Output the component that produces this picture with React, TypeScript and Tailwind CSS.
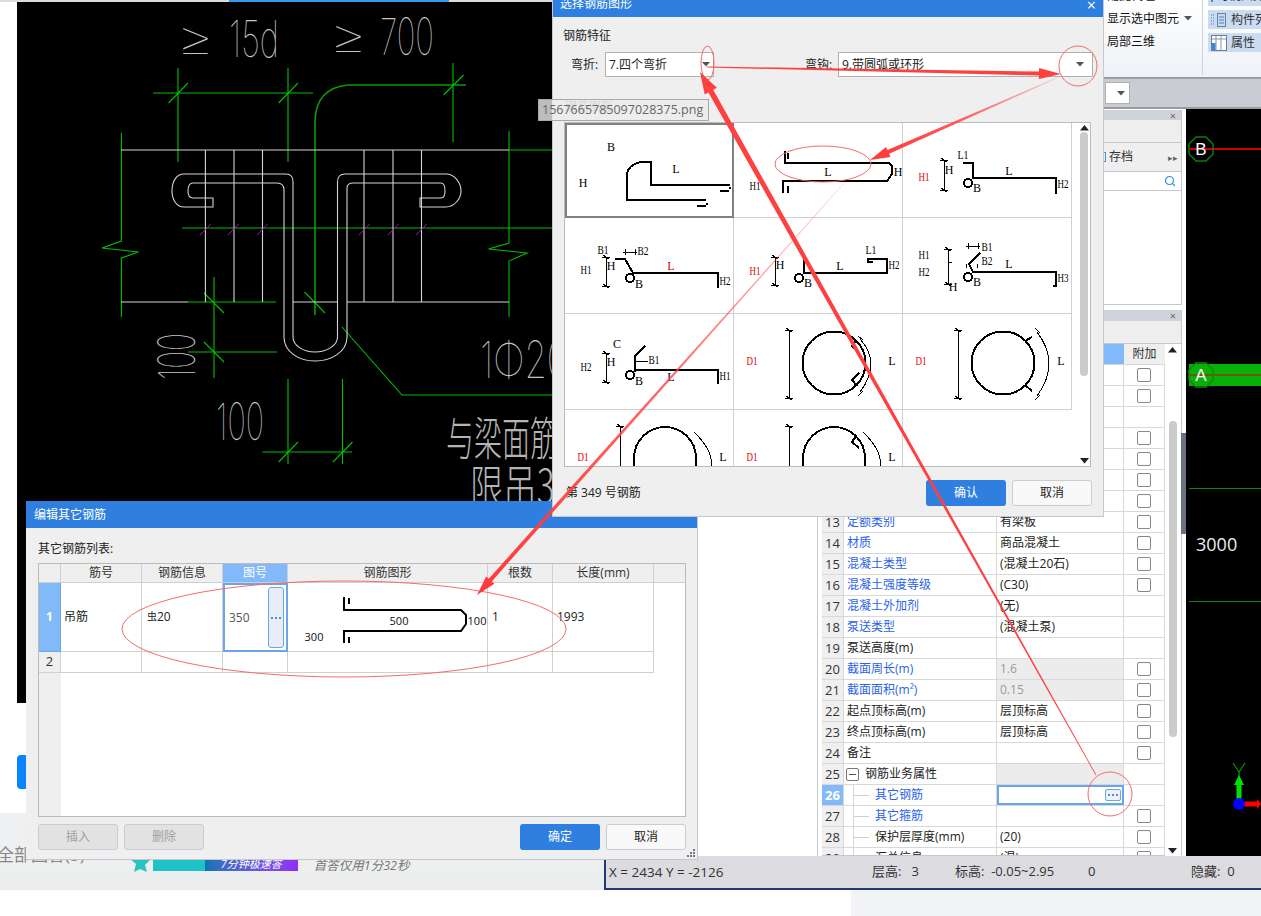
import React from "react";
import { Search } from "lucide-react";

const sans = "font-['Open_Sans','Noto_Sans_CJK_SC',sans-serif]";

function Caret({ className = "" }: { className?: string }) {
  return (
    <svg width="8" height="5" viewBox="0 0 8 5" className={className}>
      <polygon points="0,0 8,0 4,4.5" fill="#555" />
    </svg>
  );
}

function Dots() {
  return (
    <span className="flex items-center gap-[2px]">
      <span className="h-[2px] w-[2px] bg-[#4a8fdc]" />
      <span className="h-[2px] w-[2px] bg-[#4a8fdc]" />
      <span className="h-[2px] w-[2px] bg-[#4a8fdc]" />
    </span>
  );
}

/* ---------- CAD drawing ---------- */
function Cad() {
  const g = "#00c000";
  const w = "#d4d4d4";
  return (
    <svg viewBox="17 2 535 701" width="535" height="701" className="block">
      <rect x="17" y="2" width="535" height="701" fill="#000" />
      <g fill="none" stroke={g} strokeWidth="1.1">
        <path d="M153 93H313M178 68V162M288 68V162M168.6 103L188 83M278.6 103L298 83" />
        <path d="M466 85H348Q315 88 315 123V315" stroke="#0b9a0b" strokeWidth="1.6" />
        <path d="M453 63V142M443.6 95L463.6 75" />
        <path d="M121.4 133V241L102 248L138.6 252L121.4 258V317" />
        <path d="M509 131V243L488.6 249L527 253L509 261V317" />
        <path d="M182 228H552M509 150H552M188 302H276" />
        <path d="M214 277V378M204 293L224 313M204 342L224 362M188 352H277M304.6 292L325 313" />
        <path d="M342 327L402 395H552" />
        <path d="M288 379V464M342.5 379V464M262.5 452H352M278.6 462L298 442M333 462L352.5 442" />
      </g>
      <g fill="none" stroke={w} strokeWidth="1.1">
        <path d="M121 150H509M121 302H188M293 302H337.5M347 302H509" />
        <path d="M205.4 150V302M234 150V302M262.5 150V302M364 150V302M393 150V302M421.5 150V302" />
        <path d="M213 207H184C176 207 172 199 172 191C172 182 176 174 184 174H286Q293 174 293 182V337C293 346 304 352 315 352C326 352 337.5 346 337.5 337V182Q337.5 174 345 174H446C454 174 461 182 461 191C461 199 454 207 446 207H420V198H441Q445 198 445 191Q445 183 441 183H353.5Q347 183 347 188V337C347 352 331 361 315 361C299 361 284 352 284 337V190Q284 183 277 183H193Q188 183 188 191Q188 198 193 198H213Z" />
      </g>
      <g stroke="#c000c0" strokeWidth="1">
        <path d="M200 235L210.7 224M228 235L238.7 224M257 235L267.7 224M359 235L369.7 224M388 235L398.7 224M416 235L426.7 224" />
      </g>
      <g fill="#c4c4c4" fontFamily="Inter, 'Liberation Sans', sans-serif" fontWeight="100">
        <text x="176" y="56" fontSize="50" textLength="39" lengthAdjust="spacingAndGlyphs">≥</text>
        <text x="229" y="57" fontSize="51" textLength="50" lengthAdjust="spacingAndGlyphs">15d</text>
        <text x="329" y="54" fontSize="50" textLength="39" lengthAdjust="spacingAndGlyphs">≥</text>
        <text x="380" y="55" fontSize="51" textLength="54" lengthAdjust="spacingAndGlyphs">700</text>
        <text x="216" y="440" fontSize="51" textLength="48" lengthAdjust="spacingAndGlyphs">100</text>
        <text transform="translate(195 380) rotate(-90)" fontSize="51" textLength="47" lengthAdjust="spacingAndGlyphs">100</text>
        <text x="480" y="378" fontSize="51" textLength="88" lengthAdjust="spacingAndGlyphs">1Φ20</text>
      </g>
      <g fill="#b4b4b4" fontFamily="'Noto Sans CJK SC', sans-serif" fontWeight="200">
        <text x="446" y="455" fontSize="46" textLength="112" lengthAdjust="spacingAndGlyphs">与梁面筋</text>
        <text x="470" y="503" fontSize="46" textLength="104" lengthAdjust="spacingAndGlyphs">限吊3T</text>
      </g>
    </svg>
  );
}

/* ---------- rebar shape thumbnails ---------- */
function T({ x, y, c, red, size = 12 }: { x: number; y: number; c: string; red?: boolean; size?: number }) {
  return (
    <text
      x={x}
      y={y}
      fontSize={size}
      fontFamily="'Liberation Serif', serif"
      textAnchor="middle"
      dominantBaseline="middle"
      fill={red ? "#e00000" : "#000"}
      textLength={c.length > 1 ? 11 : undefined}
      lengthAdjust="spacingAndGlyphs"
    >
      {c}
    </text>
  );
}

function Dim({ x, y0, y1 }: { x: number; y0: number; y1: number }) {
  return (
    <path
      d={`M${x} ${y0}V${y1}M${x - 3} ${y0 - 2}L${x + 3} ${y0 + 2}M${x - 3} ${y1 - 2}L${x + 3} ${y1 + 2}M${x - 4} ${y0}H${x + 4}M${x - 4} ${y1}H${x + 4}`}
      fill="none"
      stroke="#000"
      strokeWidth="1"
    />
  );
}

function Shape({ d }: { d: string }) {
  return <path d={d} fill="none" stroke="#000" strokeWidth="2" />;
}

function Circle1({ hooksIn }: { hooksIn: boolean }) {
  return (
    <>
      <circle cx="100" cy="49" r="31.5" fill="none" stroke="#000" strokeWidth="2" />
      {hooksIn ? (
        <path d="M122 26L118 32L125 38M125 59L118 66L123 72" fill="none" stroke="#000" strokeWidth="2" />
      ) : (
        <path d="M122 27L129 23M122 71L129 77" fill="none" stroke="#000" strokeWidth="2" />
      )}
      <Dim x={55} y0={16} y1={84} />
      <T x={18} y={48} c="D1" red />
      <T x={158} y={48} c="L" />
      {hooksIn ? (
        <path d="M126 25Q148 49 126 78M124 22L129 26M124 82L129 77" fill="none" stroke="#000" strokeWidth="1" />
      ) : (
        <path d="M134 18Q158 49 134 82M132 14L137 19M132 86L137 81" fill="none" stroke="#000" strokeWidth="1" />
      )}
    </>
  );
}

const thumbs: React.ReactNode[] = [
  <>
    <T x={44} y={23} c="B" />
    <T x={16} y={59} c="H" />
    <T x={109} y={45} c="L" />
    <Shape d="M162.5 60H84V37H74Q60 40 60 51V75H138.6" />
    <path d="M153 66H162M130 81H139M163 62V64M140 78V80" stroke="#000" strokeWidth="2" />
  </>,
  <>
    <T x={94} y={50} c="L" />
    <T x={164} y={50} c="H" />
    <T x={21} y={64} c="H1" />
    <Shape d="M51 28V40H155L158 43V51L153 58H49V70" />
    <path d="M54 30V36M54 63V70" stroke="#000" strokeWidth="2" />
  </>,
  <>
    <T x={21} y={55} c="H1" red />
    <T x={46} y={48} c="H" />
    <T x={60} y={33} c="L1" />
    <T x={74} y={66} c="B" />
    <T x={106} y={49} c="L" />
    <T x={160} y={62} c="H2" />
    <Dim x={41} y0={37} y1={67} />
    <Shape d="M60 40H70V56M70 55H153V71" />
    <circle cx="65" cy="60" r="4" fill="none" stroke="#000" strokeWidth="2" />
  </>,
  <>
    <T x={38} y={33} c="B1" />
    <T x={78} y={34} c="B2" />
    <T x={21} y={53} c="H1" />
    <T x={46} y={49} c="H" />
    <T x={74} y={67} c="B" />
    <T x={106} y={49} c="L" red />
    <T x={160} y={64} c="H2" />
    <Dim x={41} y0={39} y1={68} />
    <path d="M58 34H72M60 31V37M70 31V37" stroke="#000" strokeWidth="1" />
    <Shape d="M50 41H60L68 55H153V70" />
    <circle cx="65" cy="60" r="4" fill="none" stroke="#000" strokeWidth="2" />
  </>,
  <>
    <T x={21} y={54} c="H1" red />
    <T x={46} y={48} c="H" />
    <T x={137} y={33} c="L1" />
    <T x={106} y={49} c="L" />
    <T x={74} y={66} c="B" />
    <T x={160} y={48} c="H2" />
    <Dim x={41} y0={39} y1={67} />
    <Shape d="M70 40V56M70 55H153V41H134V44H139" />
    <circle cx="65" cy="60" r="4" fill="none" stroke="#000" strokeWidth="2" />
  </>,
  <>
    <T x={21} y={38} c="H1" />
    <T x={21} y={55} c="H2" />
    <T x={50} y={70} c="H" />
    <T x={84} y={30} c="B1" />
    <T x={84} y={44} c="B2" />
    <T x={106} y={47} c="L" />
    <T x={74} y={65} c="B" />
    <T x={160} y={61} c="H3" />
    <Dim x={45} y0={31} y1={66} />
    <path d="M45 44H49M63 28H77M65 25V31M75 25V31M63 46V50M74 46V50" stroke="#000" strokeWidth="1" />
    <Shape d="M77 35L66 46L70 54H153V68H150" />
    <circle cx="65" cy="59" r="4" fill="none" stroke="#000" strokeWidth="2" />
  </>,
  <>
    <T x={52} y={31} c="C" />
    <T x={21} y={54} c="H2" />
    <T x={46} y={49} c="H" />
    <T x={74} y={68} c="B" />
    <T x={106} y={64} c="L" />
    <T x={89} y={47} c="B1" />
    <T x={160} y={63} c="H1" />
    <Dim x={41} y0={39} y1={68} />
    <path d="M71 47H83" stroke="#000" strokeWidth="1" />
    <Shape d="M80 32L70 42V58M70 56H153V70" />
    <circle cx="65" cy="61" r="4" fill="none" stroke="#000" strokeWidth="2" />
  </>,
  <Circle1 hooksIn />,
  <Circle1 hooksIn={false} />,
  <>
    <T x={18} y={48} c="D1" red />
    <T x={158} y={48} c="L" />
    <Dim x={55} y0={16} y1={90} />
    <Shape d="M69 70V48C69 30 84 17 100 17C116 17 131 30 131 48V70" />
    <path d="M129 22Q150 42 146 60" fill="none" stroke="#000" strokeWidth="1" />
  </>,
  <>
    <T x={18} y={48} c="D1" red />
    <T x={158} y={48} c="L" />
    <Dim x={55} y0={16} y1={90} />
    <Shape d="M69 70V48C69 30 84 17 100 17C116 17 131 30 131 48V70M122 26L118 32L125 38" />
    <path d="M129 22Q150 42 146 60" fill="none" stroke="#000" strokeWidth="1" />
  </>,
];

/* ---------- property rows ---------- */
type Row = {
  n: number;
  name?: string;
  value?: string;
  blue?: boolean;
  cb?: boolean;
  gray?: boolean;
  dim?: boolean;
  tree?: boolean;
  group?: boolean;
  active?: boolean;
};

const rows: Row[] = [
  { n: 6, cb: true },
  { n: 7, cb: true },
  { n: 8 },
  { n: 9, cb: true },
  { n: 10, cb: true },
  { n: 11, cb: true },
  { n: 12, cb: true },
  { n: 13, name: "定额类别", value: "有梁板", blue: true, cb: true },
  { n: 14, name: "材质", value: "商品混凝土", blue: true, cb: true },
  { n: 15, name: "混凝土类型", value: "(混凝土20石)", blue: true, cb: true },
  { n: 16, name: "混凝土强度等级", value: "(C30)", blue: true, cb: true },
  { n: 17, name: "混凝土外加剂", value: "(无)", blue: true },
  { n: 18, name: "泵送类型", value: "(混凝土泵)", blue: true },
  { n: 19, name: "泵送高度(m)" },
  { n: 20, name: "截面周长(m)", value: "1.6", blue: true, cb: true, gray: true, dim: true },
  { n: 21, name: "截面面积(m²)", value: "0.15", blue: true, cb: true, gray: true, dim: true },
  { n: 22, name: "起点顶标高(m)", value: "层顶标高", cb: true },
  { n: 23, name: "终点顶标高(m)", value: "层顶标高", cb: true },
  { n: 24, name: "备注", cb: true },
  { n: 25, name: "钢筋业务属性", group: true, gray: true },
  { n: 26, name: "其它钢筋", blue: true, tree: true, active: true },
  { n: 27, name: "其它箍筋", blue: true, tree: true, cb: true },
  { n: 28, name: "保护层厚度(mm)", value: "(20)", tree: true, cb: true },
  { n: 29, name: "汇总信息", value: "(混)", tree: true, cb: true },
];

function PropRow({ r }: { r: Row }) {
  return (
    <div className="grid grid-cols-[22px_153px_127px_41px] h-[21px] text-[12px] leading-[20px] border-b border-[#d8d8d8] text-[#222]">
      <div
        className={
          r.active
            ? "bg-[#82baf9] text-white font-bold text-center text-[13px] border-r border-[#d8d8d8]"
            : "bg-[#efefef] text-[#333] text-center text-[13px] border-r border-[#d8d8d8]"
        }
      >
        {r.n}
      </div>
      <div className="relative flex items-center border-r border-[#d8d8d8] whitespace-nowrap overflow-hidden">
        {r.group && (
          <span className="ml-[2px] mr-[6px] flex h-[13px] w-[13px] items-center justify-center rounded-[2px] border border-[#777]">
            <span className="h-px w-[7px] bg-[#555]" />
          </span>
        )}
        {r.tree && (
          <>
            <span className="absolute left-[9px] top-0 h-full w-px bg-[#d8d8d8]" />
            <span className="ml-[9px] mr-[6px] h-px w-[16px] bg-[#cfcfcf]" />
          </>
        )}
        <span className={r.tree ? "" : r.group ? "" : "ml-[3px]"} style={r.blue ? { color: "#2b62e8" } : undefined}>
          {r.name}
        </span>
      </div>
      <div
        className={
          r.active
            ? "relative flex items-center justify-end border-2 border-[#69a5ea] pr-[1px]"
            : r.gray
              ? "flex items-center bg-[#ececec] border-r border-[#d8d8d8] px-[3px]"
              : "flex items-center border-r border-[#d8d8d8] px-[3px]"
        }
      >
        {r.active ? (
          <span className="flex h-[12px] w-[16px] items-center justify-center rounded-[2px] border border-[#6aa6e8] bg-[#eef2f8]">
            <Dots />
          </span>
        ) : (
          <span className={r.dim ? "text-[#999]" : ""}>{r.value}</span>
        )}
      </div>
      <div className="flex items-center justify-center border-r border-[#d8d8d8]">
        {r.cb && <span className="h-[14px] w-[14px] rounded-[2px] border border-[#888] bg-white" />}
      </div>
    </div>
  );
}

/* ---------- overlay arrows ---------- */
function taper(x0: number, y0: number, x1: number, y1: number, w0: number, w1: number, hl: number, hw: number) {
  const dx = x1 - x0;
  const dy = y1 - y0;
  const len = Math.hypot(dx, dy);
  const ux = dx / len;
  const uy = dy / len;
  const nx = -uy;
  const ny = ux;
  const bx = x1 - ux * hl;
  const by = y1 - uy * hl;
  const pts: number[][] = [
    [x0 + (nx * w0) / 2, y0 + (ny * w0) / 2],
    [bx + (nx * w1) / 2, by + (ny * w1) / 2],
    [bx + (nx * hw) / 2, by + (ny * hw) / 2],
    [x1, y1],
    [bx - (nx * hw) / 2, by - (ny * hw) / 2],
    [bx - (nx * w1) / 2, by - (ny * w1) / 2],
    [x0 - (nx * w0) / 2, y0 - (ny * w0) / 2],
  ];
  return pts.map((p) => p.map((v) => v.toFixed(1)).join(",")).join(" ");
}

function Annotations() {
  return (
    <svg width="1261" height="916" viewBox="0 0 1261 916" className="pointer-events-none absolute left-0 top-0 z-40">
      <defs>
        <linearGradient id="g3" gradientUnits="userSpaceOnUse" x1="1059" y1="77" x2="880" y2="155">
          <stop offset="0" stopColor="#ff4444" stopOpacity="0.25" />
          <stop offset="0.6" stopColor="#ff4444" stopOpacity="0.9" />
          <stop offset="1" stopColor="#ff3b3b" />
        </linearGradient>
        <linearGradient id="g4" gradientUnits="userSpaceOnUse" x1="845" y1="182" x2="490" y2="580">
          <stop offset="0" stopColor="#ff4444" stopOpacity="0.2" />
          <stop offset="0.5" stopColor="#ff4444" stopOpacity="0.8" />
          <stop offset="1" stopColor="#ff3b3b" />
        </linearGradient>
      </defs>
      <g fill="none" stroke="#f76a6a" strokeWidth="1">
        <ellipse cx="707.5" cy="63" rx="6.5" ry="17" />
        <ellipse cx="1078" cy="66" rx="19" ry="20" />
        <ellipse cx="823" cy="164" rx="48" ry="18" />
        <ellipse cx="344" cy="629" rx="222" ry="48" />
        <circle cx="1110" cy="794" r="22" />
      </g>
      <polygon points={taper(707, 67, 1061, 74, 1, 4, 22, 11)} fill="#ff4040" />
      <polygon points={taper(1096, 775, 700, 72, 0.8, 5.5, 22, 14)} fill="#ff4040" />
      <polygon points={taper(1059, 77, 870, 160, 0.6, 4, 20, 11)} fill="url(#g3)" />
      <polygon points={taper(845, 182, 477, 595, 0.6, 4, 20, 11)} fill="url(#g4)" />
    </svg>
  );
}

/* ---------- main ---------- */
export default function App() {
  const filename = "1567665785097028375.png";
  return (
    <div className={`relative h-[916px] w-[1261px] overflow-hidden bg-white text-[12px] text-[#222] ${sans}`}>
      {/* web page behind */}
      <div className="absolute left-0 top-0 h-[2px] w-full bg-[#dcdcdc]">
        <div className="ml-[229px] h-[2px] w-[220px] bg-[#2f9bf0]" />
      </div>
      <div className="absolute left-[17px] top-[2px]">
        <Cad />
      </div>
      <div className="absolute left-[17px] top-[755px] h-[34px] w-[20px] rounded-l-[4px] bg-[#0a84ff]" />
      <div className="absolute left-0 top-[813px] flex h-[77px] w-[605px] items-start bg-gradient-to-b from-[#f0f1f3] to-[#eceded]">
        <span className="ml-[-3px] mt-[32px] text-[17px] leading-[20px] text-[#888] whitespace-nowrap">全部回答(5)</span>
        <div className="ml-[44px] mt-[40px] flex items-center">
          <svg width="22" height="18" viewBox="0 0 22 18" className="mt-[2px]">
            <polygon points="0,3 8,4 11,0 14,4 22,4 16,10 18,17 11,14 5,17 7,9" fill="#27c4c0" />
          </svg>
          <span className="ml-[2px] h-[16px] w-[52px] bg-[#1fc3c7]" />
          <span className="flex h-[16px] w-[93px] items-center justify-center bg-gradient-to-r from-[#0473b8] to-[#8f2cf5] text-[11px] italic leading-none text-white whitespace-nowrap">
            7分钟极速答
          </span>
        </div>
        <span className="ml-[16px] mt-[45px] text-[12.5px] italic leading-[16px] text-[#777] whitespace-nowrap">首答仅用1分32秒</span>
      </div>
      <div className="absolute left-[851px] top-[890px] h-[26px] w-[410px] bg-[#f2f3f5]" />

      {/* desktop application window */}
      <div className="absolute left-[817px] top-0 flex h-[856px] w-[444px] flex-col border-l border-[#c8ccd4] bg-white">
        <div className="flex h-[79px] shrink-0 justify-end border-b-2 border-[#9a9ca0] bg-gradient-to-b from-white to-[#eef2f7]">
          <div className="flex w-[95px] flex-col text-[12px] leading-[23px] text-[#111]">
            <div className="-mt-[16px] h-[23px] whitespace-nowrap">配提代理</div>
            <div className="flex items-center gap-[5px] whitespace-nowrap">
              显示选中图元
              <Caret />
            </div>
            <div className="whitespace-nowrap">局部三维</div>
          </div>
          <div className="mr-[5px] h-[75px] w-px bg-[#cfd3d9]" />
          <div className="flex w-[53px] flex-col gap-[2px] text-[12px] leading-[20px] text-[#333] overflow-hidden">
            <div className="-mt-[14px] flex h-[20px] items-center gap-[4px] bg-[#c9dcf2] pl-[3px] whitespace-nowrap">
              <span className="h-[12px] w-[16px] border border-[#6b7f99] bg-white" />
              可视图元
            </div>
            <div className="mt-[2px] flex h-[19px] items-center gap-[4px] bg-[#c9dcf2] pl-[3px] whitespace-nowrap">
              <svg width="16" height="16" viewBox="0 0 16 16" fill="none" className="shrink-0" stroke="#4a7fc0">
                <path d="M0 3H4M0 6H4M0 9H4M0 12H4" strokeDasharray="1 1" />
                <rect x="6.5" y="1.5" width="8" height="13" stroke="#6b7f99" />
                <path d="M8 5H13M8 8H13M8 11H13" />
              </svg>
              构件列表
            </div>
            <div className="mt-[2px] flex h-[19px] items-center gap-[4px] bg-[#c9dcf2] pl-[3px] whitespace-nowrap">
              <svg width="16" height="16" viewBox="0 0 16 16" fill="none" className="shrink-0">
                <rect x="0.5" y="0.5" width="15" height="15" fill="#fff" stroke="#6b7f99" />
                <path d="M5 1V15M10 1V15M1 4H15" stroke="#8a97a8" />
                <rect x="1" y="8" width="3.5" height="7" fill="#3f84d8" />
              </svg>
              属性
            </div>
          </div>
        </div>
        <div className="flex h-[30px] shrink-0 items-start bg-[#c9ccd2] border-b-2 border-[#9a9ca0]">
          <div className="ml-[287px] mt-[3px] flex h-[22px] w-[25px] items-center justify-end border border-[#b0b0b0] bg-white pr-[4px]">
            <Caret />
          </div>
        </div>
        <div className="flex min-h-0 flex-1">
          <div className="flex w-[368px] shrink-0 flex-col pl-[4px] pr-[4px]">
            {/* upper panel */}
            <div className="mt-[1px] flex h-[195px] shrink-0 flex-col border-b border-r border-[#c5c8d0]">
              <div className="flex h-[10px] items-center justify-end bg-[#d0d3da] pr-[5px] text-[11px] leading-none text-[#666]">×</div>
              <div className="h-[23px] bg-[#eeeeee] border-b border-[#c5c8d0]" />
              <div className="flex h-[29px] items-center justify-end gap-[35px] bg-[#efefef] border-b border-[#c5c8d0] pr-[3px] text-[12px]">
                <span className="flex items-center gap-[3px] text-[#333]">
                  <span className="h-[10px] w-[4px] border-y border-r border-[#4a8fdc]" />
                  存档
                </span>
                <span className="text-[9px] text-[#666] leading-none">▸▸</span>
              </div>
              <div className="flex h-[19px] items-center justify-end border-b border-[#c5c8d0] bg-white pr-[5px]">
                <Search size={12} color="#2b8fd1" strokeWidth={2.4} />
              </div>
              <div className="flex-1 bg-white" />
            </div>
            {/* lower panel */}
            <div className="mt-[5px] flex min-h-0 flex-1 flex-col border-r border-[#c5c8d0]">
              <div className="flex h-[11px] shrink-0 items-center justify-end bg-[#d0d3da] pr-[5px] text-[11px] leading-none text-[#666]">×</div>
              <div className="h-[23px] shrink-0 bg-[#eeeeee] border-b border-[#c5c8d0]" />
              <div className="flex min-h-0 flex-1">
                <div className="w-[343px] shrink-0 overflow-hidden border-b border-[#c5c8d0]">
                  <div className="grid h-[21px] grid-cols-[22px_153px_127px_41px] border-b border-[#d8d8d8]">
                    <div className="bg-[#efefef]" />
                    <div className="bg-[#efefef]" />
                    <div className="bg-[#82baf9]" />
                    <div className="flex items-center justify-center bg-[#efefef] text-[12px] text-[#333]">附加</div>
                  </div>
                  {rows.map((r) => (
                    <PropRow key={r.n} r={r} />
                  ))}
                </div>
                <div className="relative w-[15px] shrink-0 bg-white">
                  <svg width="9" height="6" viewBox="0 0 9 6" className="absolute left-[3px] top-[3px]">
                    <polygon points="0,5.5 9,5.5 4.5,0" fill="#222" />
                  </svg>
                  <div className="absolute left-[4px] top-[77px] h-[316px] w-[8px] rounded-[4px] bg-[#cbcbcb]" />
                  <svg width="9" height="6" viewBox="0 0 9 6" className="absolute left-[3px] bottom-[2px]">
                    <polygon points="0,0 9,0 4.5,5.5" fill="#222" />
                  </svg>
                </div>
              </div>
            </div>
          </div>
          {/* canvas */}
          <div className="relative flex-1 bg-black">
            <svg width="75" height="747" viewBox="1186 109 75 747" className="block">
              <rect x="1189" y="364" width="72" height="22" fill="#0ab00a" />
              <path d="M1190 149H1261" stroke="#d00000" strokeWidth="2" />
              <path d="M1190 375H1261" stroke="#d00000" strokeWidth="1" />
              <polygon points="1196,137 1206,137 1213,144 1213,154 1206,161 1196,161 1189,154 1189,144" fill="none" stroke="#0a7d0a" strokeWidth="1.5" />
              <polygon points="1196,363 1206,363 1213,370 1213,380 1206,387 1196,387 1189,380 1189,370" fill="none" stroke="#0a8d0a" strokeWidth="1.5" />
              <text x="1201" y="155" fontSize="17" fill="#fff" textAnchor="middle" fontFamily="'Liberation Sans', sans-serif">B</text>
              <text x="1201" y="381" fontSize="17" fill="#fff" textAnchor="middle" fontFamily="'Liberation Sans', sans-serif">A</text>
              <path d="M1189 488.5H1261M1189 601.5H1261" stroke="#0a8a0a" strokeWidth="1.2" />
              <text x="1196" y="551" fontSize="18" fill="#eee" fontFamily="'Open Sans', sans-serif">3000</text>
              <path d="M1239 804V780" stroke="#00e000" strokeWidth="5" />
              <polygon points="1234,785 1244,785 1239,775" fill="#00e000" />
              <path d="M1233 763L1239 772L1245 763M1239 772V777" stroke="#00c000" strokeWidth="1" fill="none" />
              <path d="M1239 804H1259" stroke="#ff0000" strokeWidth="5" />
              <polygon points="1257,799 1257,809 1261,804" fill="#ff0000" />
              <circle cx="1239" cy="804" r="6" fill="#0000ff" />
            </svg>
          </div>
        </div>
      </div>
      <div className="absolute left-[1181px] top-[433px] h-[101px] w-[5px] bg-[#6b7280]" />

      {/* status bar */}
      <div className="absolute left-[604px] top-[856px] flex h-[34px] w-[657px] items-center border-b-2 border-l-2 border-[#1f3a6e] bg-[#dcdce0] text-[13px] text-[#333] whitespace-nowrap">
        <span className="ml-[3px] w-[263px] text-[13.5px]">X = 2434 Y = -2126</span>
        <span className="w-[83px]">层高:&nbsp;&nbsp;&nbsp;3</span>
        <span className="w-[133px]">标高:&nbsp;&nbsp;-0.05~2.95</span>
        <span className="w-[103px]">0</span>
        <span>隐藏:&nbsp;&nbsp;0</span>
      </div>

      {/* edit rebar dialog */}
      <div className="absolute left-[26px] top-[501px] z-10 flex h-[359px] w-[672px] flex-col border-b border-r border-[#c5c8d0] bg-[#efefef]">
        <div className="flex h-[27px] shrink-0 items-center bg-[#2e7fe0] pl-[8px] text-[12px] text-white">编辑其它钢筋</div>
        <div className="pl-[12px] pt-[11px] text-[12px] leading-[20px] text-[#222]">其它钢筋列表:</div>
        <div className="ml-[12px] mt-[4px] flex h-[254px] w-[648px] flex-col border border-[#bbbbbb] bg-white">
          <div className="grid h-[19px] shrink-0 grid-cols-[22px_81px_81px_65px_200px_65px_101px_1fr] bg-[#efefef] text-center text-[12px] leading-[18px] text-[#333] border-b border-[#d0d0d0]">
            <div className="border-r border-[#d0d0d0]" />
            <div className="border-r border-[#d0d0d0]">筋号</div>
            <div className="border-r border-[#d0d0d0]">钢筋信息</div>
            <div className="bg-[#82baf9] text-white border-r border-[#d0d0d0]">图号</div>
            <div className="border-r border-[#d0d0d0]">钢筋图形</div>
            <div className="border-r border-[#d0d0d0]">根数</div>
            <div className="border-r border-[#d0d0d0]">长度(mm)</div>
            <div />
          </div>
          <div className="grid h-[69px] shrink-0 grid-cols-[22px_81px_81px_65px_200px_65px_101px] text-[12px] text-[#222]">
            <div className="flex items-center justify-center bg-[#82baf9] font-bold text-white border-b border-r border-[#6aa6e8]">1</div>
            <div className="flex items-center pl-[3px] pb-[1px] border-b border-r border-[#d0d0d0]">吊筋</div>
            <div className="flex items-center pl-[5px] pb-[1px] border-b border-r border-[#d0d0d0]">
              <span className="text-[10px]">虫</span>20
            </div>
            <div className="flex items-center justify-between border-2 border-[#6aa6e8] pl-[4px] pr-[2px] text-[#555]">
              <span>350</span>
              <span className="flex h-[61px] w-[16px] items-center justify-center rounded-[3px] border border-[#6aa6e8] bg-[#e9edf5]">
                <Dots />
              </span>
            </div>
            <div className="border-b border-r border-[#d0d0d0]">
              <svg width="200" height="68" viewBox="0 0 200 68" className="block">
                <path d="M56 14V27H173L178 32V41L173 48H56V60" fill="none" stroke="#000" strokeWidth="2" />
                <path d="M61 15V21M61 54V60" stroke="#000" strokeWidth="2" />
                <g fontSize="11" fontFamily="'Open Sans', sans-serif" fill="#111" textAnchor="middle">
                  <text x="111" y="42">500</text>
                  <text x="189" y="42">100</text>
                  <text x="26" y="58">300</text>
                </g>
              </svg>
            </div>
            <div className="flex items-center pl-[4px] pb-[1px] border-b border-r border-[#d0d0d0]">1</div>
            <div className="flex items-center pl-[4px] pb-[1px] border-b border-r border-[#d0d0d0]">1993</div>
          </div>
          <div className="grid h-[21px] shrink-0 grid-cols-[22px_81px_81px_65px_200px_65px_101px] text-[13px]">
            <div className="flex items-center justify-center bg-[#efefef] text-[#333] border-b border-r border-[#d0d0d0]">2</div>
            <div className="border-b border-r border-[#d0d0d0]" />
            <div className="border-b border-r border-[#d0d0d0]" />
            <div className="border-b border-r border-[#d0d0d0]" />
            <div className="border-b border-r border-[#d0d0d0]" />
            <div className="border-b border-r border-[#d0d0d0]" />
            <div className="border-b border-r border-[#d0d0d0]" />
          </div>
          <div className="flex-1 min-h-0">
            <div className="h-full w-[22px] bg-[#efefef]" />
          </div>
        </div>
        <div className="ml-[12px] mt-[7px] flex w-[648px] items-center text-[12px]">
          <button className="h-[26px] w-[80px] rounded-[3px] border border-[#c8ccd4] bg-[#e2e2e2] text-[#a0a0a0]">插入</button>
          <button className="ml-[6px] h-[26px] w-[80px] rounded-[3px] border border-[#c8ccd4] bg-[#e2e2e2] text-[#a0a0a0]">删除</button>
          <button className="ml-auto h-[26px] w-[80px] rounded-[3px] bg-[#2e7fe0] text-white">确定</button>
          <button className="ml-[6px] h-[26px] w-[80px] rounded-[3px] border border-[#c8ccd4] bg-[#f9f9f9] text-[#222]">取消</button>
        </div>
        <svg width="8" height="8" viewBox="0 0 8 8" className="absolute bottom-[2px] right-[2px]">
          <path d="M6 0h2v2H6zM3 3h2v2H3zM6 3h2v2H6zM0 6h2v2H0zM3 6h2v2H3zM6 6h2v2H6z" fill="#777" />
        </svg>
      </div>

      {/* choose shape dialog */}
      <div className="absolute left-[552px] top-0 z-20 flex h-[517px] w-[552px] flex-col border-b border-x border-[#c5c8d0] bg-[#efefef]">
        <div className="flex h-[17px] shrink-0 items-start justify-between overflow-hidden bg-[#2e7fe0] text-[12px] text-white">
          <span className="-mt-[6px] ml-[7px] leading-[20px]">选择钢筋图形</span>
          <span className="-mt-[3px] mr-[7px] text-[16px] leading-[16px]">×</span>
        </div>
        <div className="ml-[10px] mt-[9px] h-[20px] text-[12px] leading-[20px]">钢筋特征</div>
        <div className="mt-[6px] flex h-[25px] items-center text-[12px]">
          <span className="ml-[18px] w-[34px] whitespace-nowrap">弯折:</span>
          <div className="flex h-[25px] w-[109px] items-center justify-between border border-[#b0b0b0] bg-white pl-[3px] pr-[3px]">
            <span>7.四个弯折</span>
            <Caret />
          </div>
          <span className="ml-[91px] w-[33px] whitespace-nowrap">弯钩:</span>
          <div className="flex h-[25px] w-[255px] items-center justify-between border border-[#b0b0b0] bg-white pl-[3px] pr-[8px]">
            <span>9.带圆弧或环形</span>
            <Caret />
          </div>
        </div>
        <div className="ml-[12px] mt-[20px] h-[20px] text-[12px] leading-[20px] text-[#777]">钢筋图形</div>
        <div className="ml-[11px] mt-[5px] flex h-[345px] w-[527px] shrink-0 border border-[#bbbbbb] bg-white">
          <div className="grid h-[343px] w-[507px] shrink-0 grid-cols-[169px_169px_169px] grid-rows-[95px_96px_96px_56px] overflow-hidden">
            {thumbs.map((t, i) => (
              <div
                key={i}
                className={
                  i === 0
                    ? "border-2 border-[#808080] overflow-hidden"
                    : i >= 9
                      ? "border-r border-[#d0d0d0] overflow-hidden"
                      : "border-b border-r border-[#d0d0d0] overflow-hidden"
                }
              >
                <svg width="168" height="95" viewBox="0 0 168 95" className="block" shapeRendering="crispEdges">
                  {t}
                </svg>
              </div>
            ))}
          </div>
          <div className="relative flex-1">
            <svg width="9" height="6" viewBox="0 0 9 6" className="absolute left-[8px] top-[2px]">
              <polygon points="0,5.5 9,5.5 4.5,0" fill="#222" />
            </svg>
            <div className="absolute left-[8px] top-[9px] h-[244px] w-[8px] rounded-[4px] bg-[#cbcbcb]" />
            <svg width="9" height="6" viewBox="0 0 9 6" className="absolute left-[8px] bottom-[2px]">
              <polygon points="0,0 9,0 4.5,5.5" fill="#222" />
            </svg>
          </div>
        </div>
        <div className="ml-[13px] mt-[13px] flex h-[26px] w-[526px] items-center text-[12px]">
          <span>第 349 号钢筋</span>
          <button className="ml-auto h-[26px] w-[80px] rounded-[3px] bg-[#2e7fe0] text-white">确认</button>
          <button className="ml-[6px] h-[26px] w-[80px] rounded-[3px] border border-[#c8ccd4] bg-[#f9f9f9] text-[#222]">取消</button>
        </div>
      </div>

      {/* file tooltip */}
      <div className="absolute left-[538px] top-[99px] z-30 flex h-[22px] w-[171px] items-center overflow-hidden border border-[#a8a8a8] bg-[#ececec]/80 pl-[3px] text-[12.5px] text-[#666] whitespace-nowrap">
        {filename}
      </div>

      <Annotations />
    </div>
  );
}
